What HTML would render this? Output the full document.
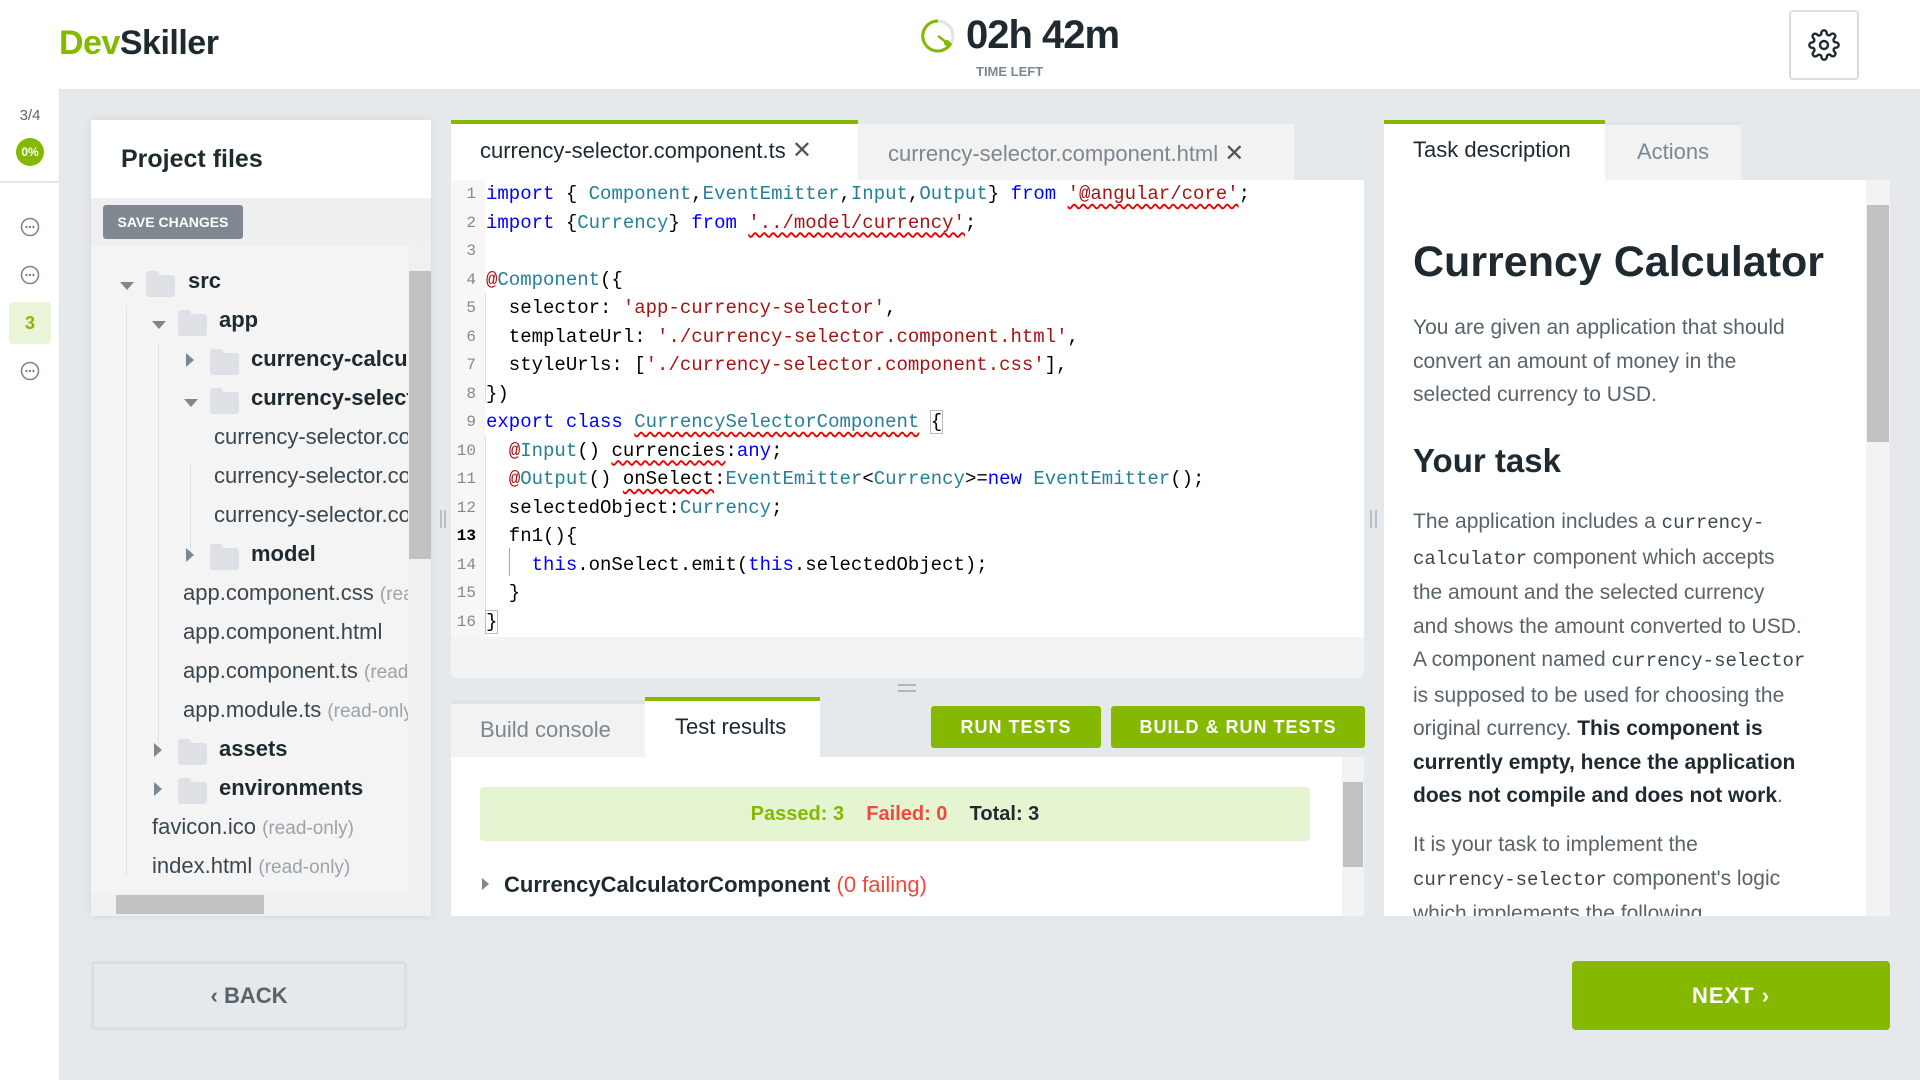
<!DOCTYPE html>
<html><head><meta charset="utf-8"><style>
*{box-sizing:border-box;margin:0;padding:0}
body{width:1920px;height:1080px;background:#e5e9ec;font-family:"Liberation Sans",sans-serif;position:relative;overflow:hidden;color:#1e2a30}
.a{position:absolute}
.hdr{left:0;top:0;width:1920px;height:89px;background:#fff}
.rail{left:0;top:89px;width:60px;height:991px;background:#fff;border-right:1px solid #dde2e5}
.pf{left:91px;top:120px;width:340px;height:796px;background:#f4f4f4;box-shadow:0 0 8px rgba(0,0,0,.08);overflow:hidden}
.tr{position:absolute;font-size:22px;white-space:nowrap;color:#3a4750;line-height:30px}
.tr b{color:#1e2a30}
.fo{position:absolute;width:29px;height:22px;background:#dde1e5;border-radius:3px}
.fo:before{content:"";position:absolute;left:0;top:-4px;width:13px;height:6px;background:#dde1e5;border-radius:3px 3px 0 0}
.ar{position:absolute;width:0;height:0}
.ad{border-left:7px solid transparent;border-right:7px solid transparent;border-top:8px solid #7c8790}
.ari{border-top:7px solid transparent;border-bottom:7px solid transparent;border-left:8px solid #7c8790}
.ro{color:#9aa3ab;font-size:19px}
.code{font-family:"Liberation Mono",monospace;font-size:19px;white-space:pre;line-height:28.5px;color:#000}
.ln{font-family:"Liberation Mono",monospace;font-size:16px;color:#888;line-height:28.5px;text-align:right;width:24px}
.k{color:#0000ff}.t{color:#267f99}.s{color:#a31515}.sq{text-decoration:underline wavy #e00;text-decoration-skip-ink:none;text-underline-offset:4px}
.btn{background:#84b900;color:#fff;font-weight:bold;font-size:18px;text-align:center;border-radius:3px;letter-spacing:1px}
.rp{font-size:21px;color:#59636b;line-height:33.5px;white-space:nowrap}
.rp code{font-family:"Liberation Mono",monospace;font-size:19px;color:#3a4750}
.rp b{color:#1e2a30}
</style></head><body>
<div class="a hdr"></div>
<div class="a" style="left:59px;top:24px;font-size:34px;font-weight:bold;letter-spacing:-0.5px"><span style="color:#84b900">Dev</span><span style="color:#1e2a30">Skiller</span></div>
<svg class="a" style="left:920px;top:18px" width="36" height="36" viewBox="0 0 36 36"><circle cx="18" cy="18" r="15" fill="none" stroke="#e1e4e6" stroke-width="3"/><path d="M18 3 A15 15 0 1 0 31 25" fill="none" stroke="#84b900" stroke-width="3"/><line x1="18" y1="18" x2="26" y2="24" stroke="#84b900" stroke-width="2.5"/><circle cx="27" cy="25" r="3" fill="#84b900"/></svg>
<div class="a" style="left:966px;top:13px;font-size:40px;font-weight:bold;color:#1e2a30;letter-spacing:-1px">02h 42m</div>
<div class="a" style="left:976px;top:64px;font-size:13px;font-weight:bold;color:#7c8790">TIME LEFT</div>
<div class="a" style="left:1789px;top:10px;width:70px;height:70px;border:2px solid #d8dde1;border-radius:4px"></div>
<svg class="a" style="left:1808px;top:29px" width="32" height="32" viewBox="0 0 24 24" fill="none" stroke="#1e2a30" stroke-width="1.8"><circle cx="12" cy="12" r="3"/><path d="M19.4 15a1.7 1.7 0 0 0 .3 1.8l.1.1a2 2 0 1 1-2.8 2.8l-.1-.1a1.7 1.7 0 0 0-1.8-.3 1.7 1.7 0 0 0-1 1.5V21a2 2 0 1 1-4 0v-.1a1.7 1.7 0 0 0-1.1-1.5 1.7 1.7 0 0 0-1.8.3l-.1.1a2 2 0 1 1-2.8-2.800l.1-.1a1.7 1.7 0 0 0 .3-1.8 1.7 1.7 0 0 0-1.5-1H3a2 2 0 1 1 0-4h.1a1.7 1.7 0 0 0 1.5-1.1 1.7 1.7 0 0 0-.3-1.8l-.1-.1a2 2 0 1 1 2.8-2.8l.1.1a1.7 1.7 0 0 0 1.8.3H9a1.7 1.7 0 0 0 1-1.5V3a2 2 0 1 1 4 0v.1a1.7 1.7 0 0 0 1 1.5 1.7 1.7 0 0 0 1.8-.3l.1-.1a2 2 0 1 1 2.8 2.8l-.1.1a1.7 1.7 0 0 0-.3 1.8V9a1.7 1.7 0 0 0 1.5 1H21a2 2 0 1 1 0 4h-.1a1.7 1.7 0 0 0-1.500 1z"/></svg>

<div class="a rail"></div>
<div class="a" style="left:0;top:107px;width:60px;text-align:center;font-size:15px;color:#59636b">3/4</div>
<div class="a" style="left:16px;top:138px;width:28px;height:28px;border-radius:50%;background:#84b900;color:#fff;font-size:12px;font-weight:bold;text-align:center;line-height:28px">0%</div>
<div class="a" style="left:0;top:181px;width:60px;height:2px;background:#e3e6e9"></div>
<svg class="a" style="left:20px;top:217px" width="20" height="20" viewBox="0 0 20 20"><circle cx="10" cy="10" r="8.5" fill="none" stroke="#7c8790" stroke-width="1.6"/><circle cx="6.5" cy="10" r="1.2" fill="#7c8790"/><circle cx="10" cy="10" r="1.2" fill="#7c8790"/><circle cx="13.5" cy="10" r="1.2" fill="#7c8790"/></svg>
<svg class="a" style="left:20px;top:265px" width="20" height="20" viewBox="0 0 20 20"><circle cx="10" cy="10" r="8.5" fill="none" stroke="#7c8790" stroke-width="1.6"/><circle cx="6.5" cy="10" r="1.2" fill="#7c8790"/><circle cx="10" cy="10" r="1.2" fill="#7c8790"/><circle cx="13.5" cy="10" r="1.2" fill="#7c8790"/></svg>
<div class="a" style="left:9px;top:302px;width:42px;height:42px;background:#eaf4d9;border-radius:4px;color:#84b900;font-weight:bold;font-size:18px;text-align:center;line-height:42px">3</div>
<svg class="a" style="left:20px;top:361px" width="20" height="20" viewBox="0 0 20 20"><circle cx="10" cy="10" r="8.5" fill="none" stroke="#7c8790" stroke-width="1.6"/><circle cx="6.5" cy="10" r="1.2" fill="#7c8790"/><circle cx="10" cy="10" r="1.2" fill="#7c8790"/><circle cx="13.5" cy="10" r="1.2" fill="#7c8790"/></svg>

<div class="a pf">
 <div class="a" style="left:0;top:0;width:340px;height:78px;background:#fff"></div>
 <div class="a" style="left:30px;top:25px;font-size:25px;font-weight:bold;color:#1e2a30">Project files</div>
 <div class="a" style="left:0;top:78px;width:340px;height:48px;background:#eeeff0"></div>
 <div class="a" style="left:12px;top:85px;width:140px;height:34px;background:#7f8891;border-radius:3px;color:#fff;font-size:14px;font-weight:bold;text-align:center;line-height:34px">SAVE CHANGES</div>
 <div class="a" style="left:318px;top:126px;width:22px;height:648px;background:#f0f0f0"></div>
 <div class="a" style="left:318px;top:151px;width:22px;height:288px;background:#c1c1c1"></div>
 <div class="a" style="left:0;top:773px;width:340px;height:23px;background:#f0f0f0"></div>
 <div class="a" style="left:25px;top:775px;width:148px;height:19px;background:#c1c1c1"></div>
</div>
<div class="a" style="left:92px;top:246px;width:316px;height:647px;overflow:hidden">
 <div class="a" style="left:34px;top:60px;width:1px;height:570px;background:#e2e2e2"></div>
 <div class="a" style="left:66px;top:98px;width:1px;height:400px;background:#e2e2e2"></div>
 <div class="a" style="left:98px;top:218px;width:1px;height:90px;background:#e2e2e2"></div>
 <div class="ar ad" style="left:28px;top:36px"></div><div class="fo" style="left:54px;top:29px"></div><div class="tr" style="left:96px;top:20px"><b>src</b></div>
 <div class="ar ad" style="left:60px;top:75px"></div><div class="fo" style="left:86px;top:68px"></div><div class="tr" style="left:127px;top:59px"><b>app</b></div>
 <div class="ar ari" style="left:94px;top:107px"></div><div class="fo" style="left:118px;top:107px"></div><div class="tr" style="left:159px;top:98px"><b>currency-calculator</b></div>
 <div class="ar ad" style="left:92px;top:153px"></div><div class="fo" style="left:118px;top:146px"></div><div class="tr" style="left:159px;top:137px"><b>currency-selector</b></div>
 <div class="tr" style="left:122px;top:176px">currency-selector.component.css</div>
 <div class="tr" style="left:122px;top:215px">currency-selector.component.html</div>
 <div class="tr" style="left:122px;top:254px">currency-selector.component.ts</div>
 <div class="ar ari" style="left:94px;top:302px"></div><div class="fo" style="left:118px;top:302px"></div><div class="tr" style="left:159px;top:293px"><b>model</b></div>
 <div class="tr" style="left:91px;top:332px">app.component.css <span class="ro">(read-only)</span></div>
 <div class="tr" style="left:91px;top:371px">app.component.html</div>
 <div class="tr" style="left:91px;top:410px">app.component.ts <span class="ro">(read-only)</span></div>
 <div class="tr" style="left:91px;top:449px">app.module.ts <span class="ro">(read-only)</span></div>
 <div class="ar ari" style="left:62px;top:497px"></div><div class="fo" style="left:86px;top:497px"></div><div class="tr" style="left:127px;top:488px"><b>assets</b></div>
 <div class="ar ari" style="left:62px;top:536px"></div><div class="fo" style="left:86px;top:536px"></div><div class="tr" style="left:127px;top:527px"><b>environments</b></div>
 <div class="tr" style="left:60px;top:566px">favicon.ico <span class="ro">(read-only)</span></div>
 <div class="tr" style="left:60px;top:605px">index.html <span class="ro">(read-only)</span></div>
</div>
<div class="a" style="left:440px;top:510px;width:6px;height:18px;border-left:2px solid #b8bec3;border-right:2px solid #b8bec3"></div>

<!-- editor -->
<div class="a" style="left:451px;top:120px;width:913px;height:60px;background:#e5e9ec"></div>
<div class="a" style="left:451px;top:120px;width:407px;height:60px;background:#fff;border-top:4px solid #84b900"></div>
<div class="a" style="left:480px;top:136px;font-size:22px;color:#1e2a30">currency-selector.component.ts <span style="color:#555;font-size:24px">✕</span></div>
<div class="a" style="left:858px;top:124px;width:436px;height:56px;background:#f2f2f2"></div>
<div class="a" style="left:888px;top:139px;font-size:22px;color:#7c8790">currency-selector.component.html <span style="color:#555;font-size:24px">✕</span></div>
<div class="a" style="left:451px;top:180px;width:913px;height:457px;background:#fff"></div>
<div class="a" style="left:451px;top:637px;width:913px;height:41px;background:#f3f3f3;border-radius:0 0 6px 6px"></div>
<div class="a" style="left:451px;top:180px;width:34px;height:457px;background:#f7f7f7"></div>
<div class="a" style="left:485px;top:293px;width:1px;height:110px;background:#ddd"></div>
<div class="a" style="left:485px;top:435px;width:1px;height:190px;background:#ddd"></div>
<div class="a" style="left:509px;top:548px;width:1px;height:28px;background:#aaa"></div>
<div class="a ln" style="left:452px;top:180px">1<br>2<br>3<br>4<br>5<br>6<br>7<br>8<br>9<br>10<br>11<br>12<br><b style="color:#000">13</b><br>14<br>15<br>16</div>
<div class="a code" style="left:486px;top:180px"><span class="k">import</span> { <span class="t">Component</span>,<span class="t">EventEmitter</span>,<span class="t">Input</span>,<span class="t">Output</span>} <span class="k">from</span> <span class="s sq">'@angular/core'</span>;
<span class="k">import</span> {<span class="t">Currency</span>} <span class="k">from</span> <span class="s sq">'../model/currency'</span>;

<span class="s">@</span><span class="t">Component</span>({
  selector: <span class="s">'app-currency-selector'</span>,
  templateUrl: <span class="s">'./currency-selector.component.html'</span>,
  styleUrls: [<span class="s">'./currency-selector.component.css'</span>],
})
<span class="k">export</span> <span class="k">class</span> <span class="t sq">CurrencySelectorComponent</span> <span style="outline:1px solid #bbb">{</span>
  <span class="s">@</span><span class="t">Input</span>() <span class="sq">currencies</span>:<span class="k">any</span>;
  <span class="s">@</span><span class="t">Output</span>() <span class="sq">onSelect</span>:<span class="t">EventEmitter</span>&lt;<span class="t">Currency</span>&gt;=<span class="k">new</span> <span class="t">EventEmitter</span>();
  selectedObject:<span class="t">Currency</span>;
  fn1(){
    <span class="k">this</span>.onSelect.emit(<span class="k">this</span>.selectedObject);
  }
<span style="outline:1px solid #bbb">}</span></div>
<div class="a" style="left:898px;top:684px;width:18px;height:8px;border-top:2px solid #b0b6bb;border-bottom:2px solid #b0b6bb"></div>
<div class="a" style="left:1370px;top:510px;width:7px;height:18px;border-left:2px solid #b8bec3;border-right:2px solid #b8bec3"></div>

<!-- bottom -->
<div class="a" style="left:451px;top:700px;width:194px;height:57px;background:#f2f2f2;border-top:4px solid #dfe3e6"></div>
<div class="a" style="left:480px;top:717px;font-size:22px;color:#7c8790">Build console</div>
<div class="a" style="left:645px;top:697px;width:175px;height:60px;background:#fff;border-top:4px solid #84b900"></div>
<div class="a" style="left:675px;top:714px;font-size:22px;color:#1e2a30">Test results</div>
<div class="a btn" style="left:931px;top:706px;width:170px;height:42px;line-height:42px">RUN TESTS</div>
<div class="a btn" style="left:1111px;top:706px;width:254px;height:42px;line-height:42px">BUILD &amp; RUN TESTS</div>
<div class="a" style="left:451px;top:757px;width:913px;height:159px;background:#fff"></div>
<div class="a" style="left:1342px;top:757px;width:22px;height:159px;background:#f3f3f3"></div>
<div class="a" style="left:1343px;top:782px;width:20px;height:85px;background:#c1c1c1"></div>
<div class="a" style="left:480px;top:787px;width:830px;height:54px;background:#e5f4d1;border-radius:4px;text-align:center;font-size:20px;font-weight:bold;line-height:54px"><span style="color:#84b900">Passed: 3</span>&nbsp;&nbsp;&nbsp;&nbsp;<span style="color:#f0493e">Failed: 0</span>&nbsp;&nbsp;&nbsp;&nbsp;<span style="color:#1e2a30">Total: 3</span></div>
<div class="ar ari" style="left:482px;top:878px;border-left-color:#7c8790;border-width:6px 0 6px 7px"></div>
<div class="a" style="left:504px;top:872px;font-size:22px;font-weight:bold;color:#1e2a30">CurrencyCalculatorComponent <span style="color:#f0493e;font-weight:normal">(0 failing)</span></div>

<!-- right -->
<div class="a" style="left:1384px;top:120px;width:221px;height:60px;background:#fff;border-top:4px solid #84b900"></div>
<div class="a" style="left:1413px;top:137px;font-size:22px;color:#1e2a30">Task description</div>
<div class="a" style="left:1605px;top:122px;width:136px;height:58px;background:#f2f2f2;border-top:3px solid #dfe3e6"></div>
<div class="a" style="left:1637px;top:139px;font-size:22px;color:#7c8790">Actions</div>
<div class="a" style="left:1384px;top:180px;width:506px;height:736px;background:#fff;overflow:hidden">
 <div class="a" style="left:29px;top:58px;font-size:43px;font-weight:bold;color:#1e2a30;white-space:nowrap">Currency Calculator</div>
 <div class="a rp" style="left:29px;top:131px">You are given an application that should<br>convert an amount of money in the<br>selected currency to USD.</div>
 <div class="a" style="left:29px;top:262px;font-size:33px;font-weight:bold;color:#1e2a30">Your task</div>
 <div class="a rp" style="left:29px;top:325px">The application includes a <code>currency-</code><br><code>calculator</code> component which accepts<br>the amount and the selected currency<br>and shows the amount converted to USD.<br>A component named <code>currency-selector</code><br>is supposed to be used for choosing the<br>original currency. <b>This component is</b><br><b>currently empty, hence the application</b><br><b>does not compile and does not work</b>.</div>
 <div class="a rp" style="left:29px;top:648px">It is your task to implement the<br><code>currency-selector</code> component's logic<br>which implements the following</div>
 <div class="a" style="left:482px;top:0;width:24px;height:736px;background:#f3f3f3"></div>
 <div class="a" style="left:483px;top:25px;width:22px;height:237px;background:#c1c1c1"></div>
</div>

<!-- footer -->
<div class="a" style="left:91px;top:961px;width:316px;height:69px;border:3px solid #dcdfe2;border-radius:4px;text-align:center;line-height:63px;font-size:22px;font-weight:bold;color:#59636b">‹ BACK</div>
<div class="a btn" style="left:1572px;top:961px;width:318px;height:69px;line-height:69px;font-size:22px;border-radius:4px">NEXT ›</div>
</body></html>
